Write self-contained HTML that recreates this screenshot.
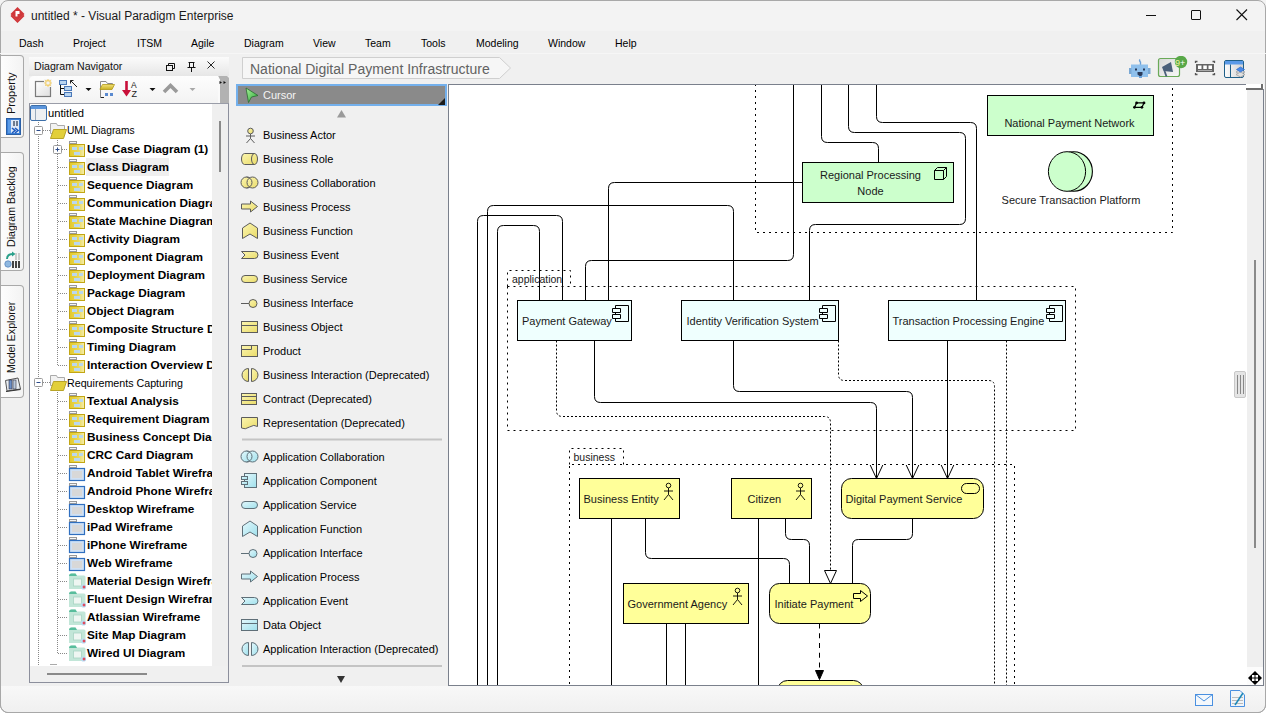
<!DOCTYPE html>
<html><head><meta charset="utf-8">
<style>
*{margin:0;padding:0;box-sizing:border-box}
html,body{width:1266px;height:713px;overflow:hidden;background:#ffffff;font-family:"Liberation Sans",sans-serif;color:#000}
.a{position:absolute;white-space:nowrap}
#win{position:absolute;left:0;top:0;width:1266px;height:713px;background:#f0f0f0;border:1px solid #9a9a9a;border-radius:8px;overflow:hidden}
#title{position:absolute;left:0;top:0;width:1266px;height:31px;background:#f3f3f3}
.vt{writing-mode:vertical-rl;transform:rotate(180deg);line-height:14px;color:#111}
.tr{height:18px;line-height:18px;color:#000}
.b{font-weight:bold}
.pt{font-size:11px;line-height:16px;color:#000}
.menu{position:absolute;top:37px;font-size:10.5px;line-height:13px;color:#000}
</style></head><body>
<div id="win"></div>
<div id="title"></div>
<div class="a" style="left:0;top:0;width:1266px;height:713px;border:1px solid #a8a8a8;border-radius:8px;pointer-events:none"></div>

<!-- title -->
<svg class="a" style="left:9px;top:6px" width="17" height="18" viewBox="0 0 17 18">
  <path d="M8.5 1 L15.5 8 L8.5 15 L1.5 8 Z" fill="#d0373a"/>
  <path d="M1.5 10 L8.5 17 L15.5 10 L14.3 8.8 L8.5 14.6 L2.7 8.8 Z" fill="#d0373a"/>
  <path d="M6.5 5 L10.5 5 L10.5 8 L8.5 8 L8.5 10.5 L6.5 10.5 Z" fill="#fff"/>
</svg>
<div class="a" style="left:31px;top:9px;font-size:12px;line-height:14px;color:#1a1a1a">untitled * - Visual Paradigm Enterprise</div>
<div class="a" style="left:1146px;top:15px;width:10px;height:1px;background:#111"></div>
<div class="a" style="left:1191px;top:10px;width:10px;height:10px;border:1px solid #111;border-radius:1px"></div>
<svg class="a" style="left:1236px;top:9px" width="12" height="12" viewBox="0 0 12 12"><path d="M0.5 0.5 L11 11 M11 0.5 L0.5 11" stroke="#111" stroke-width="1.1"/></svg>

<!-- menu -->
<div class="a" style="left:0;top:53px;width:1266px;height:1px;background:#f6f6f6"></div>
<div class="menu a" style="left:19px">Dash</div>
<div class="menu a" style="left:73px">Project</div>
<div class="menu a" style="left:137px">ITSM</div>
<div class="menu a" style="left:191px">Agile</div>
<div class="menu a" style="left:244px">Diagram</div>
<div class="menu a" style="left:313px">View</div>
<div class="menu a" style="left:365px">Team</div>
<div class="menu a" style="left:421px">Tools</div>
<div class="menu a" style="left:476px">Modeling</div>
<div class="menu a" style="left:548px">Window</div>
<div class="menu a" style="left:615px">Help</div>



<!-- left tabs -->
<div class="a" style="left:1px;top:55px;width:23px;height:83px;border:1px solid #a9a9a9;border-left:none;border-radius:0 4px 4px 0;background:linear-gradient(90deg,#fdfdfd,#f3f3f3)"></div>
<div class="a vt" style="left:4px;top:71px;width:14px;height:43px;font-size:11px">Property</div>
<svg class="a" style="left:6px;top:118px" width="15" height="17" viewBox="0 0 15 17">
  <rect x="0.5" y="0.5" width="14" height="16" fill="#3a7fd6" stroke="#2a5fa6"/>
  <rect x="2" y="2" width="11" height="13" fill="#dfe9f7"/>
  <rect x="2" y="2" width="3" height="13" fill="#5b9be6"/>
  <rect x="7" y="3" width="2" height="5" fill="#6d7b8f"/><rect x="10" y="3" width="2" height="5" fill="#6d7b8f"/>
  <path d="M6 10 L9 12.5 L6 15 M9 10 L12 12.5 L9 15" stroke="#1f5cc0" stroke-width="1.6" fill="none"/>
</svg>
<div class="a" style="left:1px;top:152px;width:23px;height:119px;border:1px solid #a9a9a9;border-left:none;border-radius:0 4px 4px 0;background:linear-gradient(90deg,#fdfdfd,#f3f3f3)"></div>
<div class="a vt" style="left:4px;top:168px;width:14px;height:79px;font-size:10.6px">Diagram Backlog</div>
<svg class="a" style="left:4px;top:251px" width="18" height="18" viewBox="0 0 18 18">
  <path d="M3 8 Q3 3 9 3" stroke="#2aa08a" stroke-width="2" fill="none"/><path d="M8 0.5 L11.5 3 L8 5.5Z" fill="#2aa08a"/>
  <circle cx="4" cy="13" r="3.2" fill="#8fb8e0" stroke="#5a88c0" stroke-width="0.8"/>
  <rect x="8" y="10" width="2" height="7" fill="#444"/><rect x="11" y="10" width="2" height="7" fill="#444"/><rect x="14" y="10" width="2" height="7" fill="#444"/>
  <rect x="11" y="2" width="2" height="7" fill="#ccc"/><rect x="14" y="2" width="2" height="7" fill="#ccc"/>
</svg>
<div class="a" style="left:1px;top:285px;width:23px;height:113px;border:1px solid #a9a9a9;border-left:none;border-radius:0 4px 4px 0;background:linear-gradient(90deg,#fdfdfd,#f3f3f3)"></div>
<div class="a vt" style="left:4px;top:301px;width:14px;height:72px;font-size:10.6px">Model Explorer</div>
<svg class="a" style="left:4px;top:376px" width="18" height="17" viewBox="0 0 18 17">
  <path d="M1.5 4.5 L14 2 L16.5 13 L3 15 Z" fill="#e8edf3" stroke="#555" stroke-width="1"/>
  <rect x="5" y="4" width="3" height="9" fill="#6a8fc8" stroke="#334" stroke-width="0.6"/>
  <rect x="9" y="4" width="3" height="9" fill="#b8c8dc" stroke="#334" stroke-width="0.6"/>
  <path d="M2 15.5 L16.5 13.5" stroke="#333" stroke-width="1.2"/>
</svg>

<!-- navigator panel -->
<div class="a" style="left:29px;top:57px;width:201px;height:627px;background:#f0f0f0"></div>
<div class="a" style="left:29px;top:57px;width:200px;height:19px;background:linear-gradient(#fbfbfb,#e6e6e6)"></div>
<div class="a" style="left:34px;top:60px;font-size:10.6px;line-height:13px;color:#111">Diagram Navigator</div>
<svg class="a" style="left:164px;top:61px" width="52" height="12" viewBox="0 0 52 12">
  <rect x="2.5" y="4.5" width="6" height="5" fill="none" stroke="#111"/>
  <path d="M4.5 4.5 V2.5 H10.5 V7.5 H8.5" fill="none" stroke="#111"/>
  <path d="M24.5 1.5 H30.5 M25.5 1.5 V6.5 H29.5 V1.5 M23.5 6.5 H31.5 M27.5 6.5 V11" fill="none" stroke="#111"/>
  <path d="M43.5 0.5 L50.5 7.5 M50.5 0.5 L43.5 7.5" stroke="#111" stroke-width="0.9"/>
</svg>
<div class="a" style="left:29px;top:76px;width:200px;height:27px;background:linear-gradient(#fdfdfd,#f3f3f3);border-radius:5px 5px 0 0"></div>
<div class="a" style="left:218px;top:76px;width:11px;height:27px;background:#b2b2b2;clip-path:polygon(0 0,9px 0,11px 2px,11px 100%,2px 100%,2px 4px)"></div><div class="a" style="left:218px;top:76px;width:3px;height:27px;background:#fafafa;clip-path:polygon(0 0,2px 4px,2px 100%,0 100%)"></div>
<svg class="a" style="left:29px;top:76px" width="202" height="27" viewBox="29 76 202 27">
  <defs><linearGradient id="nb" x1="0" y1="0" x2="1" y2="1"><stop offset="0" stop-color="#ffffff"/><stop offset="1" stop-color="#dedede"/></linearGradient>
  <linearGradient id="fy" x1="0" y1="0" x2="0" y2="1"><stop offset="0" stop-color="#f4e27a"/><stop offset="1" stop-color="#c8b020"/></linearGradient></defs>
  <path d="M219.5 81 L222 82.5 L219.5 84Z M223.5 81 L226 82.5 L223.5 84Z" fill="#111"/>
  <rect x="35.5" y="81.5" width="15" height="15" fill="url(#nb)" stroke="#7a7a7a" stroke-width="1.2"/>
  <rect x="44" y="79" width="8" height="8" fill="#f3f3f3"/>
  <path d="M48 79.5 V81.5 M48 84.5 V86.5 M44.5 83 H46.5 M49.5 83 H51.5 M45.5 80.5 L46.5 81.5 M50.5 80.5 L49.5 81.5 M45.5 85.5 L46.5 84.5 M50.5 85.5 L49.5 84.5" stroke="#f0b818" stroke-width="1.2"/>
  <rect x="59.5" y="80.5" width="7" height="4" fill="#b8d4f0" stroke="#4a78b8"/>
  <rect x="64.5" y="86.5" width="7" height="4" fill="#b8d4f0" stroke="#4a78b8"/>
  <rect x="64.5" y="92.5" width="7" height="4" fill="#b8d4f0" stroke="#4a78b8"/>
  <path d="M60.5 85 V94.5 H64 M60.5 88.5 H64" stroke="#111" fill="none"/>
  <path d="M77 87 L70.5 80.5 M70.5 80.5 H73.5 M70.5 80.5 V83.5" stroke="#222" stroke-width="1"/>
  <path d="M85.5 88 H91.5 L88.5 91Z" fill="#111"/>
  <path d="M100.5 97 V81.5 H106 L107.5 83.5 H112.5 V87" fill="none" stroke="#8a8a8a"/>
  <path d="M100 89 L102.5 84.5 H114.5 L112 89.5 H100Z" fill="url(#fy)" stroke="#b09818" stroke-width="0.8"/>
  <path d="M100.5 97.5 H104" stroke="#222"/>
  <rect x="105" y="93" width="3" height="3" fill="#5a8ad0"/><rect x="110" y="93" width="3" height="3" fill="#5a8ad0"/>
  <path d="M126.5 81 V92" stroke="#c8103a" stroke-width="2.6"/><path d="M122 90 L126.5 96.5 L131 90Z" fill="#c8103a"/>
  <text x="131" y="88" font-size="8.5" font-family="Liberation Sans" fill="#222">A</text>
  <text x="131.5" y="96.5" font-size="9" font-family="Liberation Sans" fill="#222">Z</text>
  <path d="M149.5 88 H155.5 L152.5 91Z" fill="#111"/>
  <path d="M164 92 L170.5 85.5 L177 92" fill="none" stroke="#9a9a9a" stroke-width="3.6" stroke-linejoin="miter"/>
  <path d="M189.5 88 H195.5 L192.5 91Z" fill="#a8a8a8"/>
</svg>
<!-- tree -->
<div class="a" style="left:29px;top:103px;width:200px;height:580px;border:1px solid #8c8f9c;border-top:1px solid #9a9da8"></div>
<div class="a" style="left:30px;top:104px;width:182px;height:562px;background:#fff;overflow:hidden" id="tree">
<svg class="a" style="left:0;top:0" width="182" height="562" viewBox="30 104 182 562">
<path d="M38.5 122 V666" stroke="#888" stroke-dasharray="1 1" fill="none"/>
<path d="M57.5 140 V365.5 M57.5 392 V653.5" stroke="#888" stroke-dasharray="1 1" fill="none"/>
<rect x="30.5" y="105.5" width="16" height="15" rx="1.5" fill="#eef0f2" stroke="#3d6fa8"/>
<rect x="31" y="106" width="15" height="3" fill="#5b95dc"/>
<rect x="35" y="109" width="1" height="11" fill="#9ab"/>
<rect x="34.5" y="126.5" width="8" height="8" rx="1" fill="#fff" stroke="#999"/>
<path d="M36.5 130.5 H40.5" stroke="#2a4a8a" stroke-width="1"/>
<path d="M43 130.5 H50" stroke="#888" stroke-dasharray="1 1"/>
<path d="M50.5 123.5 H56.5 L57.5 125.5 H64.5 V133.5 H50.5Z" fill="#f2f2f2" stroke="#aaa"/>
<path d="M50.5 138.5 L53.5 129.5 H66.5 L63.5 138.5Z" fill="#e2cf3a" stroke="#b8a428"/>
<rect x="53.5" y="145.5" width="8" height="8" rx="1" fill="#fff" stroke="#999"/>
<path d="M55.5 149.5 H59.5 M57.5 147.5 V151.5" stroke="#2a4a8a"/>
<path d="M62 149.5 H68" stroke="#888" stroke-dasharray="1 1"/>
<rect x="69.5" y="141.5" width="7" height="2" fill="#f4f4f4" stroke="#999"/>
<rect x="69.5" y="144.5" width="15" height="12" fill="url(#yg)" stroke="#c2a614"/>
<rect x="72" y="147" width="5" height="3" fill="#b9d8f0"/><rect x="79" y="147" width="4" height="3" fill="#b9d8f0"/><rect x="74" y="152" width="6" height="3" fill="#b9d8f0"/>
<path d="M58 167.5 H68" stroke="#888" stroke-dasharray="1 1"/>
<rect x="69.5" y="159.5" width="7" height="2" fill="#f4f4f4" stroke="#999"/>
<rect x="69.5" y="162.5" width="15" height="12" fill="url(#yg)" stroke="#c2a614"/>
<rect x="72" y="165" width="5" height="3" fill="#b9d8f0"/><rect x="79" y="165" width="4" height="3" fill="#b9d8f0"/><rect x="74" y="170" width="6" height="3" fill="#b9d8f0"/>
<path d="M58 185.5 H68" stroke="#888" stroke-dasharray="1 1"/>
<rect x="69.5" y="177.5" width="7" height="2" fill="#f4f4f4" stroke="#999"/>
<rect x="69.5" y="180.5" width="15" height="12" fill="url(#yg)" stroke="#c2a614"/>
<rect x="72" y="183" width="5" height="3" fill="#b9d8f0"/><rect x="79" y="183" width="4" height="3" fill="#b9d8f0"/><rect x="74" y="188" width="6" height="3" fill="#b9d8f0"/>
<path d="M58 203.5 H68" stroke="#888" stroke-dasharray="1 1"/>
<rect x="69.5" y="195.5" width="7" height="2" fill="#f4f4f4" stroke="#999"/>
<rect x="69.5" y="198.5" width="15" height="12" fill="url(#yg)" stroke="#c2a614"/>
<rect x="72" y="201" width="5" height="3" fill="#b9d8f0"/><rect x="79" y="201" width="4" height="3" fill="#b9d8f0"/><rect x="74" y="206" width="6" height="3" fill="#b9d8f0"/>
<path d="M58 221.5 H68" stroke="#888" stroke-dasharray="1 1"/>
<rect x="69.5" y="213.5" width="7" height="2" fill="#f4f4f4" stroke="#999"/>
<rect x="69.5" y="216.5" width="15" height="12" fill="url(#yg)" stroke="#c2a614"/>
<rect x="72" y="219" width="5" height="3" fill="#b9d8f0"/><rect x="79" y="219" width="4" height="3" fill="#b9d8f0"/><rect x="74" y="224" width="6" height="3" fill="#b9d8f0"/>
<path d="M58 239.5 H68" stroke="#888" stroke-dasharray="1 1"/>
<rect x="69.5" y="231.5" width="7" height="2" fill="#f4f4f4" stroke="#999"/>
<rect x="69.5" y="234.5" width="15" height="12" fill="url(#yg)" stroke="#c2a614"/>
<rect x="72" y="237" width="5" height="3" fill="#b9d8f0"/><rect x="79" y="237" width="4" height="3" fill="#b9d8f0"/><rect x="74" y="242" width="6" height="3" fill="#b9d8f0"/>
<path d="M58 257.5 H68" stroke="#888" stroke-dasharray="1 1"/>
<rect x="69.5" y="249.5" width="7" height="2" fill="#f4f4f4" stroke="#999"/>
<rect x="69.5" y="252.5" width="15" height="12" fill="url(#yg)" stroke="#c2a614"/>
<rect x="72" y="255" width="5" height="3" fill="#b9d8f0"/><rect x="79" y="255" width="4" height="3" fill="#b9d8f0"/><rect x="74" y="260" width="6" height="3" fill="#b9d8f0"/>
<path d="M58 275.5 H68" stroke="#888" stroke-dasharray="1 1"/>
<rect x="69.5" y="267.5" width="7" height="2" fill="#f4f4f4" stroke="#999"/>
<rect x="69.5" y="270.5" width="15" height="12" fill="url(#yg)" stroke="#c2a614"/>
<rect x="72" y="273" width="5" height="3" fill="#b9d8f0"/><rect x="79" y="273" width="4" height="3" fill="#b9d8f0"/><rect x="74" y="278" width="6" height="3" fill="#b9d8f0"/>
<path d="M58 293.5 H68" stroke="#888" stroke-dasharray="1 1"/>
<rect x="69.5" y="285.5" width="7" height="2" fill="#f4f4f4" stroke="#999"/>
<rect x="69.5" y="288.5" width="15" height="12" fill="url(#yg)" stroke="#c2a614"/>
<rect x="72" y="291" width="5" height="3" fill="#b9d8f0"/><rect x="79" y="291" width="4" height="3" fill="#b9d8f0"/><rect x="74" y="296" width="6" height="3" fill="#b9d8f0"/>
<path d="M58 311.5 H68" stroke="#888" stroke-dasharray="1 1"/>
<rect x="69.5" y="303.5" width="7" height="2" fill="#f4f4f4" stroke="#999"/>
<rect x="69.5" y="306.5" width="15" height="12" fill="url(#yg)" stroke="#c2a614"/>
<rect x="72" y="309" width="5" height="3" fill="#b9d8f0"/><rect x="79" y="309" width="4" height="3" fill="#b9d8f0"/><rect x="74" y="314" width="6" height="3" fill="#b9d8f0"/>
<path d="M58 329.5 H68" stroke="#888" stroke-dasharray="1 1"/>
<rect x="69.5" y="321.5" width="7" height="2" fill="#f4f4f4" stroke="#999"/>
<rect x="69.5" y="324.5" width="15" height="12" fill="url(#yg)" stroke="#c2a614"/>
<rect x="72" y="327" width="5" height="3" fill="#b9d8f0"/><rect x="79" y="327" width="4" height="3" fill="#b9d8f0"/><rect x="74" y="332" width="6" height="3" fill="#b9d8f0"/>
<path d="M58 347.5 H68" stroke="#888" stroke-dasharray="1 1"/>
<rect x="69.5" y="339.5" width="7" height="2" fill="#f4f4f4" stroke="#999"/>
<rect x="69.5" y="342.5" width="15" height="12" fill="url(#yg)" stroke="#c2a614"/>
<rect x="72" y="345" width="5" height="3" fill="#b9d8f0"/><rect x="79" y="345" width="4" height="3" fill="#b9d8f0"/><rect x="74" y="350" width="6" height="3" fill="#b9d8f0"/>
<path d="M58 365.5 H68" stroke="#888" stroke-dasharray="1 1"/>
<rect x="69.5" y="357.5" width="7" height="2" fill="#f4f4f4" stroke="#999"/>
<rect x="69.5" y="360.5" width="15" height="12" fill="url(#yg)" stroke="#c2a614"/>
<rect x="72" y="363" width="5" height="3" fill="#b9d8f0"/><rect x="79" y="363" width="4" height="3" fill="#b9d8f0"/><rect x="74" y="368" width="6" height="3" fill="#b9d8f0"/>
<rect x="34.5" y="378.5" width="8" height="8" rx="1" fill="#fff" stroke="#999"/>
<path d="M36.5 382.5 H40.5" stroke="#2a4a8a" stroke-width="1"/>
<path d="M43 382.5 H50" stroke="#888" stroke-dasharray="1 1"/>
<path d="M50.5 375.5 H56.5 L57.5 377.5 H64.5 V385.5 H50.5Z" fill="#f2f2f2" stroke="#aaa"/>
<path d="M50.5 390.5 L53.5 381.5 H66.5 L63.5 390.5Z" fill="#e2cf3a" stroke="#b8a428"/>
<path d="M58 401.5 H68" stroke="#888" stroke-dasharray="1 1"/>
<rect x="69.5" y="393.5" width="7" height="2" fill="#f4f4f4" stroke="#999"/>
<rect x="69.5" y="396.5" width="15" height="12" fill="url(#yg)" stroke="#c2a614"/>
<rect x="72" y="399" width="5" height="3" fill="#b9d8f0"/><rect x="79" y="399" width="4" height="3" fill="#b9d8f0"/><rect x="74" y="404" width="6" height="3" fill="#b9d8f0"/>
<path d="M58 419.5 H68" stroke="#888" stroke-dasharray="1 1"/>
<rect x="69.5" y="411.5" width="7" height="2" fill="#f4f4f4" stroke="#999"/>
<rect x="69.5" y="414.5" width="15" height="12" fill="url(#yg)" stroke="#c2a614"/>
<rect x="72" y="417" width="5" height="3" fill="#b9d8f0"/><rect x="79" y="417" width="4" height="3" fill="#b9d8f0"/><rect x="74" y="422" width="6" height="3" fill="#b9d8f0"/>
<path d="M58 437.5 H68" stroke="#888" stroke-dasharray="1 1"/>
<rect x="69.5" y="429.5" width="7" height="2" fill="#f4f4f4" stroke="#999"/>
<rect x="69.5" y="432.5" width="15" height="12" fill="url(#yg)" stroke="#c2a614"/>
<rect x="72" y="435" width="5" height="3" fill="#b9d8f0"/><rect x="79" y="435" width="4" height="3" fill="#b9d8f0"/><rect x="74" y="440" width="6" height="3" fill="#b9d8f0"/>
<path d="M58 455.5 H68" stroke="#888" stroke-dasharray="1 1"/>
<rect x="69.5" y="447.5" width="7" height="2" fill="#f4f4f4" stroke="#999"/>
<rect x="69.5" y="450.5" width="15" height="12" fill="url(#yg)" stroke="#c2a614"/>
<rect x="72" y="453" width="5" height="3" fill="#b9d8f0"/><rect x="79" y="453" width="4" height="3" fill="#b9d8f0"/><rect x="74" y="458" width="6" height="3" fill="#b9d8f0"/>
<path d="M58 473.5 H68" stroke="#888" stroke-dasharray="1 1"/>
<rect x="69.5" y="465.5" width="7" height="2" fill="#f4f4f4" stroke="#999"/>
<rect x="69.5" y="468.5" width="15" height="12" fill="#cfe0f4" stroke="#2f6fc0" stroke-width="1.2"/>
<rect x="72" y="471" width="10" height="7" fill="#d8d8d8"/>
<path d="M58 491.5 H68" stroke="#888" stroke-dasharray="1 1"/>
<rect x="69.5" y="483.5" width="7" height="2" fill="#f4f4f4" stroke="#999"/>
<rect x="69.5" y="486.5" width="15" height="12" fill="#cfe0f4" stroke="#2f6fc0" stroke-width="1.2"/>
<rect x="72" y="489" width="10" height="7" fill="#d8d8d8"/>
<path d="M58 509.5 H68" stroke="#888" stroke-dasharray="1 1"/>
<rect x="69.5" y="501.5" width="7" height="2" fill="#f4f4f4" stroke="#999"/>
<rect x="69.5" y="504.5" width="15" height="12" fill="#cfe0f4" stroke="#2f6fc0" stroke-width="1.2"/>
<rect x="72" y="507" width="10" height="7" fill="#d8d8d8"/>
<path d="M58 527.5 H68" stroke="#888" stroke-dasharray="1 1"/>
<rect x="69.5" y="519.5" width="7" height="2" fill="#f4f4f4" stroke="#999"/>
<rect x="69.5" y="522.5" width="15" height="12" fill="#cfe0f4" stroke="#2f6fc0" stroke-width="1.2"/>
<rect x="72" y="525" width="10" height="7" fill="#d8d8d8"/>
<path d="M58 545.5 H68" stroke="#888" stroke-dasharray="1 1"/>
<rect x="69.5" y="537.5" width="7" height="2" fill="#f4f4f4" stroke="#999"/>
<rect x="69.5" y="540.5" width="15" height="12" fill="#cfe0f4" stroke="#2f6fc0" stroke-width="1.2"/>
<rect x="72" y="543" width="10" height="7" fill="#d8d8d8"/>
<path d="M58 563.5 H68" stroke="#888" stroke-dasharray="1 1"/>
<rect x="69.5" y="555.5" width="7" height="2" fill="#f4f4f4" stroke="#999"/>
<rect x="69.5" y="558.5" width="15" height="12" fill="#cfe0f4" stroke="#2f6fc0" stroke-width="1.2"/>
<rect x="72" y="561" width="10" height="7" fill="#d8d8d8"/>
<path d="M58 581.5 H68" stroke="#888" stroke-dasharray="1 1"/>
<path d="M69 589 V576 Q69 573.5 71.5 573.5 H75.5 L77 575.5 H84 Q85.5 575.5 85.5 577 V589Z" fill="#c2e6d8"/>
<path d="M69 576.5 Q69 573.5 71.5 573.5 H75.5 L77 576 H69Z" fill="#58bd9c"/>
<rect x="73.5" y="579" width="8" height="7" fill="#eef6f2" stroke="#a8d4c4" stroke-width="0.8"/>
<circle cx="83.5" cy="587" r="2.6" fill="#b8dcf4"/><path d="M84 585.3 L85.7 587 L84 588.7 L82.3 587Z" fill="#e04858"/>
<path d="M58 599.5 H68" stroke="#888" stroke-dasharray="1 1"/>
<path d="M69 607 V594 Q69 591.5 71.5 591.5 H75.5 L77 593.5 H84 Q85.5 593.5 85.5 595 V607Z" fill="#c2e6d8"/>
<path d="M69 594.5 Q69 591.5 71.5 591.5 H75.5 L77 594 H69Z" fill="#58bd9c"/>
<rect x="73.5" y="597" width="8" height="7" fill="#eef6f2" stroke="#a8d4c4" stroke-width="0.8"/>
<circle cx="83.5" cy="605" r="2.6" fill="#b8dcf4"/><path d="M84 603.3 L85.7 605 L84 606.7 L82.3 605Z" fill="#e04858"/>
<path d="M58 617.5 H68" stroke="#888" stroke-dasharray="1 1"/>
<path d="M69 625 V612 Q69 609.5 71.5 609.5 H75.5 L77 611.5 H84 Q85.5 611.5 85.5 613 V625Z" fill="#c2e6d8"/>
<path d="M69 612.5 Q69 609.5 71.5 609.5 H75.5 L77 612 H69Z" fill="#58bd9c"/>
<rect x="73.5" y="615" width="8" height="7" fill="#eef6f2" stroke="#a8d4c4" stroke-width="0.8"/>
<circle cx="83.5" cy="623" r="2.6" fill="#b8dcf4"/><path d="M84 621.3 L85.7 623 L84 624.7 L82.3 623Z" fill="#e04858"/>
<path d="M58 635.5 H68" stroke="#888" stroke-dasharray="1 1"/>
<path d="M69 643 V630 Q69 627.5 71.5 627.5 H75.5 L77 629.5 H84 Q85.5 629.5 85.5 631 V643Z" fill="#c2e6d8"/>
<path d="M69 630.5 Q69 627.5 71.5 627.5 H75.5 L77 630 H69Z" fill="#58bd9c"/>
<rect x="73.5" y="633" width="8" height="7" fill="#eef6f2" stroke="#a8d4c4" stroke-width="0.8"/>
<circle cx="83.5" cy="641" r="2.6" fill="#b8dcf4"/><path d="M84 639.3 L85.7 641 L84 642.7 L82.3 641Z" fill="#e04858"/>
<path d="M58 653.5 H68" stroke="#888" stroke-dasharray="1 1"/>
<path d="M69 661 V648 Q69 645.5 71.5 645.5 H75.5 L77 647.5 H84 Q85.5 647.5 85.5 649 V661Z" fill="#c2e6d8"/>
<path d="M69 648.5 Q69 645.5 71.5 645.5 H75.5 L77 648 H69Z" fill="#58bd9c"/>
<rect x="73.5" y="651" width="8" height="7" fill="#eef6f2" stroke="#a8d4c4" stroke-width="0.8"/>
<circle cx="83.5" cy="659" r="2.6" fill="#b8dcf4"/><path d="M84 657.3 L85.7 659 L84 660.7 L82.3 659Z" fill="#e04858"/>
<rect x="50" y="664" width="7" height="1" fill="#aaa"/>
<defs><linearGradient id="yg" x1="0" x2="1"><stop offset="0" stop-color="#e3c92a"/><stop offset="0.6" stop-color="#ead85a"/><stop offset="1" stop-color="#f5eeb0"/></linearGradient></defs>
</svg>
<div class="a tr" style="left:18px;top:0px;font-size:11.2px">untitled</div>
<div class="a tr" style="left:37px;top:18px;font-size:10.2px">UML Diagrams</div>
<div class="a tr b" style="left:56px;top:36px;font-size:11.8px;padding-left:1px">Use Case Diagram (1)</div>
<div class="a tr b" style="left:56px;top:54px;font-size:11.8px;background:#efefef;padding-left:1px">Class Diagram</div>
<div class="a tr b" style="left:56px;top:72px;font-size:11.8px;padding-left:1px">Sequence Diagram</div>
<div class="a tr b" style="left:56px;top:90px;font-size:11.8px;padding-left:1px">Communication Diagram</div>
<div class="a tr b" style="left:56px;top:108px;font-size:11.8px;padding-left:1px">State Machine Diagram</div>
<div class="a tr b" style="left:56px;top:126px;font-size:11.8px;padding-left:1px">Activity Diagram</div>
<div class="a tr b" style="left:56px;top:144px;font-size:11.8px;padding-left:1px">Component Diagram</div>
<div class="a tr b" style="left:56px;top:162px;font-size:11.8px;padding-left:1px">Deployment Diagram</div>
<div class="a tr b" style="left:56px;top:180px;font-size:11.8px;padding-left:1px">Package Diagram</div>
<div class="a tr b" style="left:56px;top:198px;font-size:11.8px;padding-left:1px">Object Diagram</div>
<div class="a tr b" style="left:56px;top:216px;font-size:11.8px;padding-left:1px">Composite Structure Diagram</div>
<div class="a tr b" style="left:56px;top:234px;font-size:11.8px;padding-left:1px">Timing Diagram</div>
<div class="a tr b" style="left:56px;top:252px;font-size:11.8px;padding-left:1px">Interaction Overview Diagram</div>
<div class="a tr" style="left:37px;top:270px;font-size:10.7px">Requirements Capturing</div>
<div class="a tr b" style="left:56px;top:288px;font-size:11.8px;padding-left:1px">Textual Analysis</div>
<div class="a tr b" style="left:56px;top:306px;font-size:11.8px;padding-left:1px">Requirement Diagram</div>
<div class="a tr b" style="left:56px;top:324px;font-size:11.8px;padding-left:1px">Business Concept Diagram</div>
<div class="a tr b" style="left:56px;top:342px;font-size:11.8px;padding-left:1px">CRC Card Diagram</div>
<div class="a tr b" style="left:56px;top:360px;font-size:11.8px;padding-left:1px">Android Tablet Wireframe</div>
<div class="a tr b" style="left:56px;top:378px;font-size:11.8px;padding-left:1px">Android Phone Wireframe</div>
<div class="a tr b" style="left:56px;top:396px;font-size:11.8px;padding-left:1px">Desktop Wireframe</div>
<div class="a tr b" style="left:56px;top:414px;font-size:11.8px;padding-left:1px">iPad Wireframe</div>
<div class="a tr b" style="left:56px;top:432px;font-size:11.8px;padding-left:1px">iPhone Wireframe</div>
<div class="a tr b" style="left:56px;top:450px;font-size:11.8px;padding-left:1px">Web Wireframe</div>
<div class="a tr b" style="left:56px;top:468px;font-size:11.8px;padding-left:1px">Material Design Wireframe</div>
<div class="a tr b" style="left:56px;top:486px;font-size:11.8px;padding-left:1px">Fluent Design Wireframe</div>
<div class="a tr b" style="left:56px;top:504px;font-size:11.8px;padding-left:1px">Atlassian Wireframe</div>
<div class="a tr b" style="left:56px;top:522px;font-size:11.8px;padding-left:1px">Site Map Diagram</div>
<div class="a tr b" style="left:56px;top:540px;font-size:11.8px;padding-left:1px">Wired UI Diagram</div>
</div>
<div class="a" style="left:212px;top:104px;width:16px;height:562px;background:#efefef"></div>
<div class="a" style="left:219px;top:121px;width:2px;height:51px;background:#8a8a8a"></div>
<div class="a" style="left:47px;top:673px;width:100px;height:2px;background:#8a8a8a"></div>


<div class="a" style="left:236px;top:84px;width:211px;height:602px;background:#f0f0f0"></div>
<div class="a" style="left:236px;top:84px;width:211px;height:22px;background:#8a8a8a;border:2px solid #74b0ec"></div>
<svg class="a" style="left:244px;top:87px" width="16" height="17" viewBox="0 0 16 17"><path d="M2 1 L14 8.5 L7.5 10 L4.5 15.5Z" fill="url(#cg2)" stroke="#2a6a30" stroke-width="0.8"/>
<defs><linearGradient id="cg2" x1="0" y1="0" x2="1" y2="1"><stop offset="0" stop-color="#a8f098"/><stop offset="1" stop-color="#28a838"/></linearGradient></defs></svg>
<div class="a" style="left:263px;top:88px;font-size:11px;line-height:14px;color:#f4f4f4">Cursor</div>
<svg class="a" style="left:438px;top:98px" width="7" height="7" viewBox="0 0 7 7"><path d="M0 7 L7 0 V7Z" fill="#1a1a1a"/></svg>
<svg class="a" style="left:236px;top:84px" width="212" height="602" viewBox="236 84 212 602">
<defs><linearGradient id="py" x1="0" y1="0" x2="1" y2="1"><stop offset="0" stop-color="#fbf5b0"/><stop offset="1" stop-color="#eadc6a"/></linearGradient>
<linearGradient id="pc" x1="0" y1="0" x2="1" y2="1"><stop offset="0" stop-color="#e4f8fc"/><stop offset="1" stop-color="#9fe0ec"/></linearGradient>
<linearGradient id="cg" x1="0" y1="0" x2="1" y2="1"><stop offset="0" stop-color="#9af08a"/><stop offset="1" stop-color="#1f9a2a"/></linearGradient></defs>
<circle cx="250.5" cy="131" r="2.8" fill="url(#py)" stroke="#5c5c5c"/><path d="M250.5 134 V138.5 M246 136 H255 M246.5 143 L250.5 138.5 L254.5 143" stroke="#5c5c5c" fill="none"/>
<path d="M244.5 153.5 H254.5 A3 5.5 0 0 1 254.5 164.5 H244.5 A3 5.5 0 0 1 244.5 153.5Z" fill="url(#py)" stroke="#5c5c5c"/><path d="M254.5 153.5 A3 5.5 0 0 0 254.5 164.5" fill="none" stroke="#5c5c5c"/>
<circle cx="246.5" cy="182.5" r="5.5" fill="url(#py)" stroke="#5c5c5c"/><circle cx="252.5" cy="182.5" r="5.5" fill="url(#py)" stroke="#5c5c5c"/><path d="M246.5 177 A5.5 5.5 0 0 1 246.5 188" fill="none" stroke="#5c5c5c"/>
<path d="M241.5 204 H250.5 V201 L257.5 206.5 L250.5 212 V209 H241.5Z" fill="url(#py)" stroke="#5c5c5c"/>
<path d="M242.5 228 L250 223 L257.5 228 V238.5 L250 234 L242.5 238.5Z" fill="url(#py)" stroke="#5c5c5c"/>
<path d="M241.5 251.5 H254.5 A3.5 3.5 0 0 1 254.5 258.5 H241.5 L245 255Z" fill="url(#py)" stroke="#5c5c5c"/>
<rect x="241.5" y="275.5" width="16" height="7" rx="3.5" fill="url(#py)" stroke="#5c5c5c"/>
<path d="M241 303.5 H249" stroke="#5c5c5c"/><circle cx="253" cy="303.5" r="4" fill="url(#py)" stroke="#5c5c5c"/>
<rect x="241.5" y="321.5" width="16" height="11" fill="url(#py)" stroke="#5c5c5c"/><path d="M241.5 325.5 H257.5" stroke="#5c5c5c"/>
<rect x="241.5" y="345.5" width="16" height="11" fill="url(#py)" stroke="#5c5c5c"/><path d="M241.5 349.5 H251.5 V345.5" stroke="#5c5c5c" fill="none"/>
<path d="M248.5 368.5 A6.5 6.5 0 0 0 248.5 381.5Z" fill="url(#py)" stroke="#5c5c5c"/><path d="M251.5 368.5 A6.5 6.5 0 0 1 251.5 381.5Z" fill="url(#py)" stroke="#5c5c5c"/>
<rect x="241.5" y="393.5" width="15" height="11" fill="url(#py)" stroke="#5c5c5c"/><path d="M241.5 396.5 H256.5 M241.5 400.5 H256.5" stroke="#5c5c5c"/>
<path d="M241.5 417.5 H257.5 V426.5 Q254 424 249.5 427 Q245 430 241.5 428Z" fill="url(#py)" stroke="#5c5c5c"/>
<circle cx="246.5" cy="456.5" r="5.5" fill="url(#pc)" stroke="#5f6f78"/><circle cx="252.5" cy="456.5" r="5.5" fill="url(#pc)" stroke="#5f6f78"/><path d="M246.5 451 A5.5 5.5 0 0 1 246.5 462" fill="none" stroke="#5f6f78"/>
<rect x="244.5" y="473.5" width="12" height="14" fill="url(#pc)" stroke="#5f6f78"/><rect x="241.5" y="476.5" width="6" height="3" fill="url(#pc)" stroke="#5f6f78"/><rect x="241.5" y="481.5" width="6" height="3" fill="url(#pc)" stroke="#5f6f78"/>
<rect x="241.5" y="501.5" width="16" height="7" rx="3.5" fill="url(#pc)" stroke="#5f6f78"/>
<path d="M242.5 526 L250 521 L257.5 526 V536.5 L250 532 L242.5 536.5Z" fill="url(#pc)" stroke="#5f6f78"/>
<path d="M241 553.5 H249" stroke="#5f6f78"/><circle cx="253" cy="553.5" r="4" fill="url(#pc)" stroke="#5f6f78"/>
<path d="M241.5 574 H250.5 V571 L257.5 576.5 L250.5 582 V579 H241.5Z" fill="url(#pc)" stroke="#5f6f78"/>
<path d="M241.5 597.5 H254.5 A3.5 3.5 0 0 1 254.5 604.5 H241.5 L245 601Z" fill="url(#pc)" stroke="#5f6f78"/>
<rect x="241.5" y="619.5" width="16" height="11" fill="url(#pc)" stroke="#5f6f78"/><path d="M241.5 623.5 H257.5" stroke="#5f6f78"/>
<path d="M248.5 642.5 A6.5 6.5 0 0 0 248.5 655.5Z" fill="url(#pc)" stroke="#5f6f78"/><path d="M251.5 642.5 A6.5 6.5 0 0 1 251.5 655.5Z" fill="url(#pc)" stroke="#5f6f78"/>
<rect x="242" y="438.5" width="200" height="2" fill="#c4c4c4"/>
<rect x="242" y="665" width="200" height="2" fill="#c4c4c4"/>
<path d="M337 117.5 L341.5 110 L346 117.5Z" fill="#9a9a9a"/>
<path d="M337 676 L345 676 L341 683Z" fill="#333"/>
</svg>
<div class="a pt" style="left:263px;top:127px">Business Actor</div>
<div class="a pt" style="left:263px;top:151px">Business Role</div>
<div class="a pt" style="left:263px;top:175px">Business Collaboration</div>
<div class="a pt" style="left:263px;top:199px">Business Process</div>
<div class="a pt" style="left:263px;top:223px">Business Function</div>
<div class="a pt" style="left:263px;top:247px">Business Event</div>
<div class="a pt" style="left:263px;top:271px">Business Service</div>
<div class="a pt" style="left:263px;top:295px">Business Interface</div>
<div class="a pt" style="left:263px;top:319px">Business Object</div>
<div class="a pt" style="left:263px;top:343px">Product</div>
<div class="a pt" style="left:263px;top:367px">Business Interaction (Deprecated)</div>
<div class="a pt" style="left:263px;top:391px">Contract (Deprecated)</div>
<div class="a pt" style="left:263px;top:415px">Representation (Deprecated)</div>
<div class="a pt" style="left:263px;top:449px">Application Collaboration</div>
<div class="a pt" style="left:263px;top:473px">Application Component</div>
<div class="a pt" style="left:263px;top:497px">Application Service</div>
<div class="a pt" style="left:263px;top:521px">Application Function</div>
<div class="a pt" style="left:263px;top:545px">Application Interface</div>
<div class="a pt" style="left:263px;top:569px">Application Process</div>
<div class="a pt" style="left:263px;top:593px">Application Event</div>
<div class="a pt" style="left:263px;top:617px">Data Object</div>
<div class="a pt" style="left:263px;top:641px">Application Interaction (Deprecated)</div>

<svg class="a" style="left:241px;top:56px" width="272" height="24" viewBox="241 56 272 24">
  <path d="M242.5 57.5 H499.5 L510.5 68 L499.5 78.5 H242.5Z" fill="#f6f6f6" stroke="#cfcfcf"/>
</svg>
<div class="a" style="left:250px;top:61px;font-size:14px;line-height:16px;color:#626262">National Digital Payment Infrastructure</div>
<svg class="a" style="left:1124px;top:56px" width="124" height="28" viewBox="1124 56 124 28">
  <defs>
    <linearGradient id="mg" x1="0" y1="0" x2="1" y2="1"><stop offset="0" stop-color="#d8d8d8"/><stop offset="1" stop-color="#f8f8f8"/></linearGradient>
    <linearGradient id="lg" x1="0" y1="0" x2="1" y2="0"><stop offset="0" stop-color="#fdfdfd"/><stop offset="1" stop-color="#d0d0d0"/></linearGradient>
  </defs>
  <!-- robot -->
  <path d="M1140 59.5 Q1139 61 1140.5 62 V65" stroke="#6aa0d8" stroke-width="1.4" fill="none"/>
  <rect x="1131" y="64.5" width="17" height="12.5" fill="#8fc0ec"/>
  <rect x="1129" y="68" width="2.5" height="6" fill="#7aa8d4"/><rect x="1148" y="68" width="2.5" height="6" fill="#7aa8d4"/>
  <rect x="1135" y="68.5" width="2" height="2" fill="#2a3a5a"/><rect x="1143" y="68.5" width="2" height="2" fill="#2a3a5a"/>
  <path d="M1137.5 72 H1142.5 V74.5 L1141 76.5 V78 H1139.5 V76 L1137.5 74.5Z" fill="#2a3a5a"/>
  <rect x="1139" y="76" width="3" height="2" fill="#6aa0d8"/>
  <!-- megaphone -->
  <rect x="1158.5" y="58.5" width="21" height="18" rx="2" fill="url(#mg)" stroke="#6aaa58" stroke-width="1.2"/>
  <path d="M1162 67 L1171 62 L1173 72 L1163.5 71Z" fill="#4a5f7a"/>
  <path d="M1164.5 71 L1166.5 76.5" stroke="#4a5f7a" stroke-width="1.8"/>
  <circle cx="1181" cy="62" r="6.2" fill="#58a848"/>
  <text x="1175" y="65.6" font-size="9" font-family="Liberation Sans" fill="#f0f0a0">9</text>
  <text x="1180" y="65.6" font-size="9" font-family="Liberation Sans" fill="#fff">+</text>
  <!-- fit -->
  <path d="M1195.5 63 V61.5 H1197.5 M1212.5 61.5 H1214.5 V63 M1214.5 73 V74.5 H1212.5 M1197.5 74.5 H1195.5 V73" stroke="#555" stroke-width="1.3" fill="none"/>
  <rect x="1196" y="64" width="18" height="8" fill="#646464"/>
  <rect x="1198" y="65.5" width="3.5" height="3.5" fill="#fff"/><rect x="1203.3" y="65.5" width="3.5" height="3.5" fill="#fff"/><rect x="1208.5" y="65.5" width="3.5" height="3.5" fill="#fff"/>
  <rect x="1198" y="70" width="14" height="1" fill="#aaa"/>
  <!-- layout -->
  <rect x="1224.5" y="60.5" width="19" height="17" rx="1.5" fill="url(#lg)" stroke="#1f5f88"/>
  <rect x="1225" y="61" width="18" height="3.5" fill="#5a9ae8"/>
  <path d="M1230.5 64.5 V77.5" stroke="#1f5f88"/>
  <path d="M1236 72 L1240.5 69.5 L1245 72 L1240.5 74.5Z" fill="#e0e0e0" stroke="#999" stroke-width="0.7"/>
  <path d="M1236 74.5 L1240.5 72 L1245 74.5 L1240.5 77Z" fill="#e0e0e0" stroke="#999" stroke-width="0.7"/>
  <path d="M1236.5 69.5 L1240.5 67 L1244.5 69.5 L1240.5 72Z" fill="#4a8ae8" stroke="#2a6ac8" stroke-width="0.7"/>
</svg>


<div class="a" style="left:448px;top:84px;width:816px;height:602px;background:#fff;border:1px solid #7a808c"></div>
<svg class="a" style="left:449px;top:85px" width="798" height="600" viewBox="449 85 798 600" font-family="Liberation Sans">
<path d="M755.5 84 V232.5 H1172.5 V84" fill="none" stroke="#000" stroke-width="1" stroke-dasharray="2 4"/>
<path d="M507.5 286.5 V270.5 H570.5 V286.5" fill="none" stroke="#000" stroke-width="1" stroke-dasharray="2 4"/>
<path d="M507.5 286.5 H1075.5 V430.5 H507.5Z" fill="none" stroke="#000" stroke-width="1" stroke-dasharray="2 4"/>
<path d="M569.5 464.5 V448.5 H623.5 V464.5" fill="none" stroke="#000" stroke-width="1" stroke-dasharray="2 4"/>
<path d="M569.5 690 V464.5 H1014.5 V690" fill="none" stroke="#000" stroke-width="1" stroke-dasharray="2 4"/>
<rect x="802.5" y="162.5" width="151" height="40" rx="0" fill="#ccffcc" stroke="#000" stroke-width="1"/>
<rect x="987.5" y="95.5" width="166" height="40" rx="0" fill="#ccffcc" stroke="#000" stroke-width="1"/>
<rect x="517.5" y="300.5" width="114" height="40" rx="0" fill="#effffe" stroke="#000" stroke-width="1"/>
<rect x="681.5" y="300.5" width="157" height="40" rx="0" fill="#effffe" stroke="#000" stroke-width="1"/>
<rect x="888.5" y="300.5" width="177" height="40" rx="0" fill="#effffe" stroke="#000" stroke-width="1"/>
<rect x="579.5" y="478.5" width="100" height="40" rx="0" fill="#ffff99" stroke="#000" stroke-width="1"/>
<rect x="731.5" y="478.5" width="80" height="40" rx="0" fill="#ffff99" stroke="#000" stroke-width="1"/>
<rect x="841.5" y="478.5" width="142" height="40" rx="10" fill="#ffff99" stroke="#000" stroke-width="1"/>
<rect x="623.5" y="583.5" width="125" height="40" rx="0" fill="#ffff99" stroke="#000" stroke-width="1"/>
<rect x="769.5" y="583.5" width="101" height="40" rx="10" fill="#ffff99" stroke="#000" stroke-width="1"/>
<rect x="777.5" y="680.5" width="86" height="40" rx="10" fill="#ffff99" stroke="#000" stroke-width="1"/>
<ellipse cx="1073.6" cy="171.5" rx="18.8" ry="19.8" fill="#ccffcc" stroke="#000" stroke-width="1.1"/>
<ellipse cx="1067" cy="171.5" rx="18.6" ry="19.8" fill="#ccffcc" stroke="#000" stroke-width="1"/>
<path d="M585.5 300.5 L585.5 266.5 Q585.5 260.5 591.5 260.5 L787.5 260.5 Q793.5 260.5 793.5 254.5 L793.5 70.5" fill="none" stroke="#000" stroke-width="1"/>
<path d="M608.5 300.5 L608.5 188.5 Q608.5 182.5 614.5 182.5 L802.5 182.5" fill="none" stroke="#000" stroke-width="1"/>
<path d="M562.5 300.5 L562.5 221.5 Q562.5 215.5 556.5 215.5 L483.5 215.5 Q477.5 215.5 477.5 221.5 L477.5 700.5" fill="none" stroke="#000" stroke-width="1"/>
<path d="M539.5 300.5 L539.5 231.5 Q539.5 225.5 533.5 225.5 L503.5 225.5 Q497.5 225.5 497.5 231.5 L497.5 700.5" fill="none" stroke="#000" stroke-width="1"/>
<path d="M487.5 700.5 L487.5 211.5 Q487.5 205.5 493.5 205.5 L727.5 205.5 Q733.5 205.5 733.5 211.5 L733.5 300.5" fill="none" stroke="#000" stroke-width="1"/>
<path d="M809.5 300.5 L809.5 230.5 Q809.5 224.5 815.5 224.5 L959.5 224.5 Q965.5 224.5 965.5 218.5 L965.5 138.5 Q965.5 132.5 959.5 132.5 L854.5 132.5 Q848.5 132.5 848.5 126.5 L848.5 70.5" fill="none" stroke="#000" stroke-width="1"/>
<path d="M878.5 162.5 L878.5 148.5 Q878.5 142.5 872.5 142.5 L827.5 142.5 Q821.5 142.5 821.5 136.5 L821.5 70.5" fill="none" stroke="#000" stroke-width="1"/>
<path d="M976.5 300.5 L976.5 128.5 Q976.5 122.5 970.5 122.5 L882.5 122.5 Q876.5 122.5 876.5 116.5 L876.5 70.5" fill="none" stroke="#000" stroke-width="1"/>
<path d="M594.5 340.5 L594.5 396.5 Q594.5 402.5 600.5 402.5 L870.5 402.5 Q876.5 402.5 876.5 408.5 L876.5 478.5" fill="none" stroke="#000" stroke-width="1"/>
<path d="M733.5 340.5 L733.5 385.5 Q733.5 391.5 739.5 391.5 L906.5 391.5 Q912.5 391.5 912.5 397.5 L912.5 478.5" fill="none" stroke="#000" stroke-width="1"/>
<path d="M947.5 340.5 L947.5 478.5" fill="none" stroke="#000" stroke-width="1"/>
<path d="M556.5 340.5 L556.5 410.5 Q556.5 416.5 562.5 416.5 L824.5 416.5 Q830.5 416.5 830.5 422.5 L830.5 571.5" fill="none" stroke="#000" stroke-width="1" stroke-dasharray="2 2"/>
<path d="M838.5 340.5 L838.5 374.5 Q838.5 380.5 844.5 380.5 L988.5 380.5 Q994.5 380.5 994.5 386.5 L994.5 700.5" fill="none" stroke="#000" stroke-width="1" stroke-dasharray="2 2"/>
<path d="M1006.5 340.5 L1006.5 700.5" fill="none" stroke="#000" stroke-width="1" stroke-dasharray="2 2"/>
<path d="M611.5 518.5 L611.5 700.5" fill="none" stroke="#000" stroke-width="1"/>
<path d="M645.5 518.5 L645.5 552.5 Q645.5 558.5 651.5 558.5 L783.5 558.5 Q789.5 558.5 789.5 564.5 L789.5 583.5" fill="none" stroke="#000" stroke-width="1"/>
<path d="M758.5 518.5 L758.5 700.5" fill="none" stroke="#000" stroke-width="1"/>
<path d="M785.5 518.5 L785.5 533.5 Q785.5 539.5 791.5 539.5 L803.5 539.5 Q809.5 539.5 809.5 545.5 L809.5 583.5" fill="none" stroke="#000" stroke-width="1"/>
<path d="M912.5 518.5 L912.5 533.5 Q912.5 539.5 906.5 539.5 L858.5 539.5 Q852.5 539.5 852.5 545.5 L852.5 583.5" fill="none" stroke="#000" stroke-width="1"/>
<path d="M666.5 623.5 L666.5 700.5" fill="none" stroke="#000" stroke-width="1"/>
<path d="M685.5 623.5 L685.5 700.5" fill="none" stroke="#000" stroke-width="1"/>
<path d="M819.5 623.5 L819.5 671.5" fill="none" stroke="#000" stroke-width="1" stroke-dasharray="5 4.75"/>
<path d="M870.2 465 L876.5 478.5 L882.8 465" fill="none" stroke="#000" stroke-width="1"/>
<path d="M906.2 465 L912.5 478.5 L918.8 465" fill="none" stroke="#000" stroke-width="1"/>
<path d="M941.2 465 L947.5 478.5 L953.8 465" fill="none" stroke="#000" stroke-width="1"/>
<path d="M824.5 570.5 H836.5 L830.5 583.5Z" fill="#fff" stroke="#000" stroke-width="1"/>
<path d="M815.5 670.5 H823.5 L819.5 679.5Z" fill="#000" stroke="#000" stroke-width="1"/>
<path d="M934.5 170.5 H943.5 V179.5 H934.5Z M934.5 170.5 L937.5 167.5 H946.5 L943.5 170.5 M946.5 167.5 V176.5 L943.5 179.5" fill="none" stroke="#000" stroke-width="1"/>
<path d="M1134.5 107.3 L1136.6 102.9 H1144 L1141.9 107.3Z" fill="none" stroke="#000" stroke-width="1.2"/>
<circle cx="1134.5" cy="107.3" r="1.4" fill="#000"/>
<circle cx="1136.6" cy="102.9" r="1.4" fill="#000"/>
<circle cx="1144" cy="102.9" r="1.4" fill="#000"/>
<circle cx="1141.9" cy="107.3" r="1.4" fill="#000"/>
<path d="M615.5 305.5 H628.5 V321.5 H615.5Z" fill="none" stroke="#000" stroke-width="1"/>
<path d="M612.5 308.5 H620.5 V312.5 H612.5Z M612.5 314.5 H620.5 V318.5 H612.5Z" fill="#effffe" stroke="#000" stroke-width="1"/>
<path d="M822.5 305.5 H835.5 V321.5 H822.5Z" fill="none" stroke="#000" stroke-width="1"/>
<path d="M819.5 308.5 H827.5 V312.5 H819.5Z M819.5 314.5 H827.5 V318.5 H819.5Z" fill="#effffe" stroke="#000" stroke-width="1"/>
<path d="M1049.5 305.5 H1062.5 V321.5 H1049.5Z" fill="none" stroke="#000" stroke-width="1"/>
<path d="M1046.5 308.5 H1054.5 V312.5 H1046.5Z M1046.5 314.5 H1054.5 V318.5 H1046.5Z" fill="#effffe" stroke="#000" stroke-width="1"/>
<circle cx="668.5" cy="485.5" r="2.3" fill="none" stroke="#000" stroke-width="0.9"/>
<path d="M668.5 488 V494.5 M664.0 491 H673.0 M664.0 500 L668.5 494.5 L673.0 500" fill="none" stroke="#000" stroke-width="0.9"/>
<circle cx="800.5" cy="485.5" r="2.3" fill="none" stroke="#000" stroke-width="0.9"/>
<path d="M800.5 488 V494.5 M796.0 491 H805.0 M796.0 500 L800.5 494.5 L805.0 500" fill="none" stroke="#000" stroke-width="0.9"/>
<circle cx="737.5" cy="590.5" r="2.3" fill="none" stroke="#000" stroke-width="0.9"/>
<path d="M737.5 593 V599.5 M733.0 596 H742.0 M733.0 605 L737.5 599.5 L742.0 605" fill="none" stroke="#000" stroke-width="0.9"/>
<rect x="961.5" y="483.5" width="18" height="10" rx="5" fill="none" stroke="#000" stroke-width="1"/>
<path d="M853.5 593.5 H860.5 V590.5 L867.5 596 L860.5 601.5 V598.5 H853.5Z" fill="none" stroke="#000" stroke-width="1"/>
<text x="870.5" y="179" text-anchor="middle" font-size="11" fill="#1a1a1a">Regional Processing</text>
<text x="870.5" y="195" text-anchor="middle" font-size="11" fill="#1a1a1a">Node</text>
<text x="1069.5" y="127" text-anchor="middle" font-size="11" fill="#1a1a1a">National Payment Network</text>
<text x="1071" y="204" text-anchor="middle" font-size="11" fill="#1a1a1a">Secure Transaction Platform</text>
<text x="512" y="283" text-anchor="start" font-size="10.5" fill="#1a1a1a">application</text>
<text x="573.5" y="461" text-anchor="start" font-size="10.5" fill="#1a1a1a">business</text>
<text x="522" y="325" text-anchor="start" font-size="11" fill="#1a1a1a">Payment Gateway</text>
<text x="686.5" y="325" text-anchor="start" font-size="11" fill="#1a1a1a">Identity Verification System</text>
<text x="892.5" y="325" text-anchor="start" font-size="11" fill="#1a1a1a">Transaction Processing Engine</text>
<text x="583.5" y="502.5" text-anchor="start" font-size="11" fill="#1a1a1a">Business Entity</text>
<text x="747.5" y="502.5" text-anchor="start" font-size="11" fill="#1a1a1a">Citizen</text>
<text x="845.5" y="503" text-anchor="start" font-size="11" fill="#1a1a1a">Digital Payment Service</text>
<text x="627.5" y="608" text-anchor="start" font-size="11" fill="#1a1a1a">Government Agency</text>
<text x="774.5" y="608" text-anchor="start" font-size="11" fill="#1a1a1a">Initiate Payment</text>
</svg>
<div class="a" style="left:1247px;top:85px;width:16px;height:600px;background:#efefef"></div>
<div class="a" style="left:1254px;top:260px;width:2px;height:288px;background:#8a8a8a"></div>
<div class="a" style="left:1234px;top:371px;width:12px;height:27px;background:#e4e4e4;border:1px solid #c8c8c8;border-radius:2px"></div>
<div class="a" style="left:1237px;top:375px;width:1px;height:19px;background:#888"></div><div class="a" style="left:1240px;top:375px;width:1px;height:19px;background:#888"></div><div class="a" style="left:1243px;top:375px;width:1px;height:19px;background:#888"></div>
<div class="a" style="left:1246px;top:84px;width:18px;height:5px;background:#fff"></div>
<div class="a" style="left:1246px;top:88px;width:17px;height:2px;background:#6e6e6e"></div><div class="a" style="left:1261px;top:84px;width:2px;height:6px;background:#6e6e6e"></div>
<div class="a" style="left:1247px;top:667px;width:16px;height:18px;background:#fcfcfc"></div>
<svg class="a" style="left:1247px;top:670px" width="16" height="16" viewBox="0 0 16 16"><path d="M8 1 L15 8 L8 15 L1 8Z" fill="#000"/><rect x="5" y="5" width="2.5" height="2.5" fill="#fff"/><rect x="8.5" y="5" width="2.5" height="2.5" fill="#fff"/><rect x="5" y="8.5" width="2.5" height="2.5" fill="#fff"/><rect x="8.5" y="8.5" width="2.5" height="2.5" fill="#fff"/></svg>

<div class="a" style="left:1px;top:686px;width:1264px;height:26px;background:linear-gradient(#f8f8f8,#f0f0f0);border-radius:0 0 8px 8px"></div>
<svg class="a" style="left:1194px;top:689px" width="56" height="20" viewBox="1194 689 56 20">
  <rect x="1195.5" y="694.5" width="17" height="11" fill="#f4f8fc" stroke="#4a90e0"/>
  <path d="M1195.5 694.5 L1204 701 L1212.5 694.5" fill="none" stroke="#4a90e0"/>
  <path d="M1230.5 690.5 H1240 L1244.5 695 V706.5 H1230.5Z" fill="#f0f4f8" stroke="#4a90e0"/>
  <path d="M1232 697.5 H1243 M1232 700.5 H1243 M1232 703.5 H1243" stroke="#bbb"/>
  <path d="M1235 705 L1243 693" stroke="#1a88b8" stroke-width="1.5"/>
</svg>


</body></html>
